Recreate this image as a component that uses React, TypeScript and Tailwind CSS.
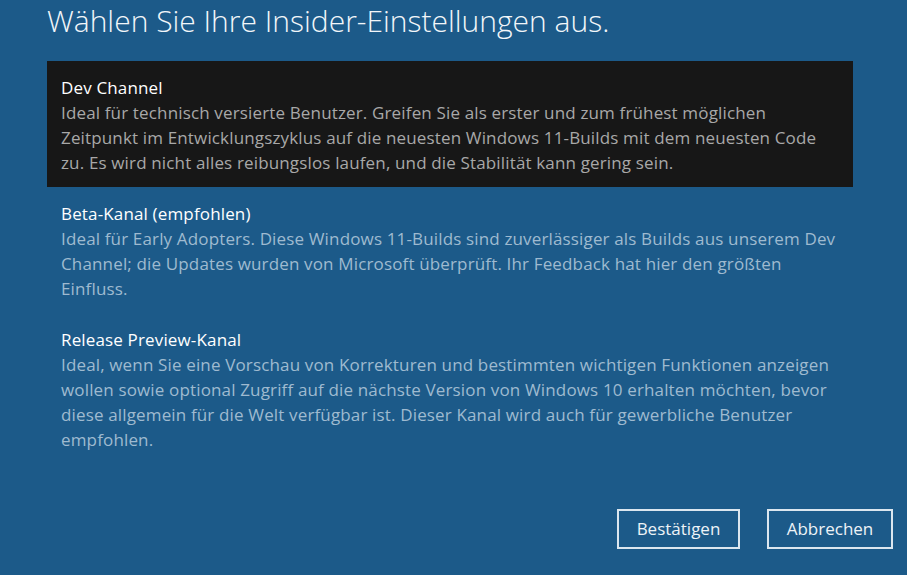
const channels = [
  {
    title: 'Dev Channel',
    lines: [
      'Ideal für technisch versierte Benutzer. Greifen Sie als erster und zum frühest möglichen',
      'Zeitpunkt im Entwicklungszyklus auf die neuesten Windows 11-Builds mit dem neuesten Code',
      'zu. Es wird nicht alles reibungslos laufen, und die Stabilität kann gering sein.',
    ],
    selected: true,
  },
  {
    title: 'Beta-Kanal (empfohlen)',
    lines: [
      'Ideal für Early Adopters. Diese Windows 11-Builds sind zuverlässiger als Builds aus unserem Dev',
      'Channel; die Updates wurden von Microsoft überprüft. Ihr Feedback hat hier den größten',
      'Einfluss.',
    ],
    selected: false,
  },
  {
    title: 'Release Preview-Kanal',
    lines: [
      'Ideal, wenn Sie eine Vorschau von Korrekturen und bestimmten wichtigen Funktionen anzeigen',
      'wollen sowie optional Zugriff auf die nächste Version von Windows 10 erhalten möchten, bevor',
      'diese allgemein für die Welt verfügbar ist. Dieser Kanal wird auch für gewerbliche Benutzer',
      'empfohlen.',
    ],
    selected: false,
  },
];

export default function App() {
  return (
    <div className="w-[907px] h-[575px] bg-[#1c5a89] flex flex-col pl-[47px] pr-[14px] overflow-hidden font-['Open_Sans',sans-serif]">
      <h1 className="mt-[1px] h-[60px] text-[30px] font-light leading-[40px] text-[#f2f6f9] whitespace-nowrap">
        Wählen Sie Ihre Insider-Einstellungen aus.
      </h1>

      <div className="flex flex-col w-[806px]">
        {channels.map((c) => (
          <div
            key={c.title}
            className={
              c.selected
                ? 'bg-[#171717] px-[14px] pt-[14px] pb-[12px]'
                : 'px-[14px] pt-[14px] pb-[12px]'
            }
          >
            <div className="text-[17px] tracking-[0.15px] leading-[25px] text-white whitespace-nowrap">{c.title}</div>
            {c.lines.map((l) => (
              <div
                key={l}
                className={
                  c.selected
                    ? 'text-[17px] tracking-[0.15px] leading-[25px] text-[#a8a8a8] whitespace-nowrap'
                    : 'text-[17px] tracking-[0.15px] leading-[25px] text-[#9fbad0] whitespace-nowrap'
                }
              >
                {l}
              </div>
            ))}
          </div>
        ))}
      </div>

      <div className="mt-auto mb-[26px] flex justify-end gap-[27px]">
        <button className="w-[123px] h-[40px] border-2 border-[#dbe6ef] text-[17px] text-[#eef3f7]">
          Bestätigen
        </button>
        <button className="w-[126px] h-[40px] border-2 border-[#dbe6ef] text-[17px] text-[#eef3f7]">
          Abbrechen
        </button>
      </div>
    </div>
  );
}
